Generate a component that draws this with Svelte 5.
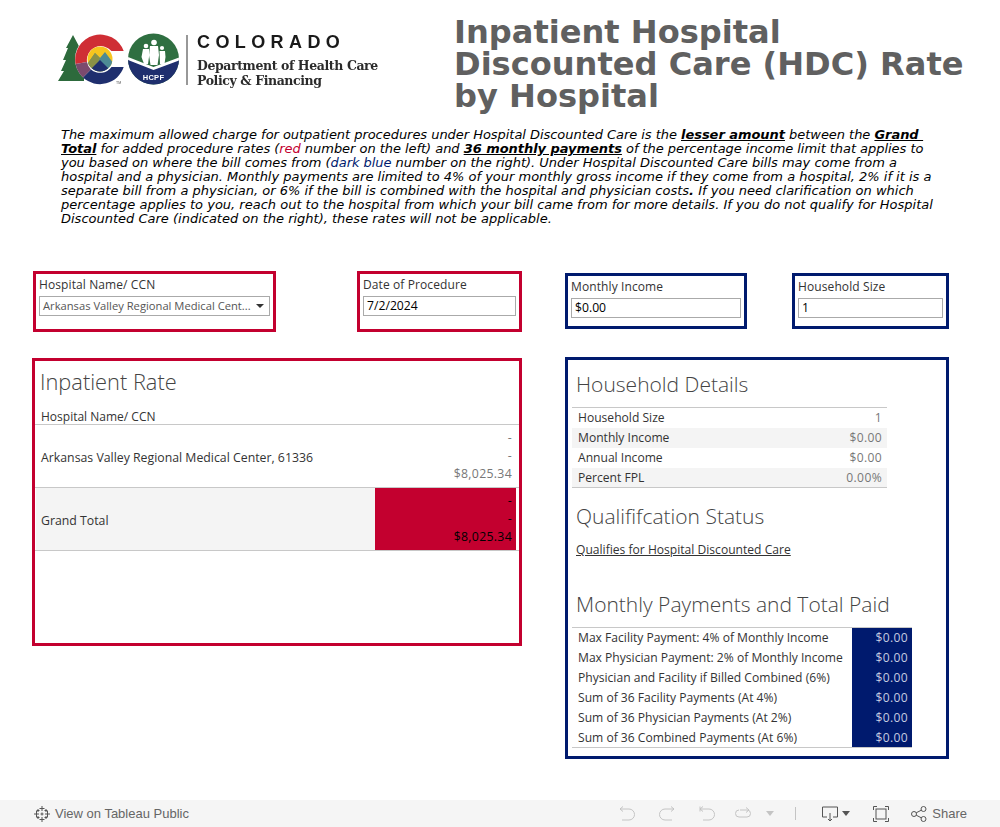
<script>
  const details = [
    ['Household Size', '1'],
    ['Monthly Income', '$0.00'],
    ['Annual Income', '$0.00'],
    ['Percent FPL', '0.00%']
  ]
  const payments = [
    'Max Facility Payment: 4% of Monthly Income',
    'Max Physician Payment: 2% of Monthly Income',
    'Physician and Facility if Billed Combined (6%)',
    'Sum of 36 Facility Payments (At 4%)',
    'Sum of 36 Physician Payments (At 2%)',
    'Sum of 36 Combined Payments (At 6%)'
  ]
</script>

<div class="page">
  <header class="top">
    <div class="logo">
      <svg class="marks" viewBox="58 33 130 52" width="130" height="52">
        <defs>
          <clipPath id="sun"><circle cx="100" cy="59" r="12.5" /></clipPath>
          <clipPath id="seal"><circle cx="153.500" cy="59" r="25.5" /></clipPath>
        </defs>
        <path d="M73 35 L81 50 L84 50 L84 81 L58 81 L64 71 L61 71 L66 60 L63 60 L68 48 L66 48 Z" fill="#2d6a3c" />
        <circle cx="100" cy="59" r="25" fill="#fff" />
        <path d="M123.7 51 A25 25 0 0 0 75.6 64 L87 62 A14 14 0 0 1 111.5 51 Z" fill="#cf2e35" />
        <path d="M75.6 64 A25 25 0 0 0 83 77.5 L91 69.5 A14 14 0 0 1 87 62 Z" fill="#7b4a6e" />
        <path d="M83 77.5 A25 25 0 0 0 123.7 67 L111.5 67 A14 14 0 0 1 91 69.5 Z" fill="#1f2f6e" />
        <g clip-path="url(#sun)">
          <rect x="87" y="46" width="26" height="26" fill="#f6c51e" />
          <path d="M86 66 L95 53 L100 58 L105 52 L114 64 L114 72 L86 72 Z" fill="#4d8a94" />
          <path d="M86 66 L95 53 L100 58 L94 72 L86 72 Z" fill="#8a9146" />
          <path d="M88 72 L100 60 L112 72 Z" fill="#1f2f6e" />
        </g>
        <text x="116" y="84" class="tm">TM</text>
        <g clip-path="url(#seal)">
          <rect x="128" y="33" width="52" height="52" fill="#2f6f41" />
          <path d="M128 59 L153.500 69 L180 59 L180 86 L128 86 Z" fill="#1f2f6e" />
          <path d="M128 57 L153.500 67 L180 57 L180 60 L153.500 70 L128 60 Z" fill="#fff" />
        </g>
        <g fill="#fff">
          <circle cx="154" cy="42.500" r="2.800" />
          <path d="M150 46 H158 L159 55 L157.500 65 H150.500 L149 55 Z" />
          <circle cx="146" cy="46" r="2.300" />
          <path d="M143 49 H149 L149 57 L148 64 H144 L141.500 57 Z" />
          <circle cx="162" cy="48" r="2.100" />
          <path d="M159.500 51 H165 L165.500 57 L164.500 64 H160 Z" />
        </g>
        <text x="153.500" y="80" class="hcpf" text-anchor="middle">HCPF</text>
        <rect x="186.5" y="35" width="1" height="50" fill="#333" />
      </svg>
      <div class="logo-text">
        <div class="state">COLORADO</div>
        <div class="dept">Department of Health Care<br />Policy &amp; Financing</div>
      </div>
    </div>
    <h1>Inpatient Hospital Discounted Care (HDC) Rate by Hospital</h1>
  </header>

  <p class="intro"><span class="tight">The maximum allowed charge for outpatient procedures under Hospital Discounted Care is the <b><u>lesser amount</u></b> between the <b><u>Grand&nbsp;</u><wbr /><u>Total</u></b> for added procedure rates (<span class="red">red</span> number on the left) and <b><u>36 monthly payments</u></b> of the percentage income limit that applies to you based on where the bill comes from (<span class="blue">dark blue</span> number on the right).</span> Under Hospital Discounted Care bills may come from a hospital and a physician. Monthly payments are limited to 4% of your monthly gross income if they come from a hospital, 2% if it is a separate bill from a physician, or 6% if the bill is combined with the hospital and physician costs<b>.</b> If you need clarification on which percentage applies to you, reach out to the hospital from which your bill came from for more details. If you do not qualify for Hospital Discounted Care (indicated on the right), these rates will not be applicable.</p>

  <div class="board">
    <section class="col col-left">
      <div class="filters">
        <div class="filter red-box hospital">
          <div class="label">Hospital Name/ CCN</div>
          <div class="field select">
            <span>Arkansas Valley Regional Medical Cent...</span>
            <i class="caret"></i>
          </div>
        </div>
        <div class="filter red-box date">
          <div class="label">Date of Procedure</div>
          <div class="field strong">7/2/2024</div>
        </div>
      </div>

      <div class="panel red-box inpatient">
        <h2>Inpatient Rate</h2>
        <div class="col-head">Hospital Name/ CCN</div>
        <div class="rate-row">
          <div class="rate-name">Arkansas Valley Regional Medical Center, 61336</div>
          <div class="rate-vals"><span>-</span><span>-</span><span>$8,025.34</span></div>
        </div>
        <div class="rate-row total">
          <div class="rate-name">Grand Total</div>
          <div class="rate-vals"><span>-</span><span>-</span><span>$8,025.34</span></div>
        </div>
      </div>
    </section>

    <section class="col col-right">
      <div class="filters">
        <div class="filter navy-box income">
          <div class="label">Monthly Income</div>
          <div class="field strong">$0.00</div>
        </div>
        <div class="filter navy-box size">
          <div class="label">Household Size</div>
          <div class="field strong">1</div>
        </div>
      </div>

      <div class="panel navy-box household">
        <h2>Household Details</h2>
        <div class="details">
          {#each details as [name, val]}
            <div class="row"><span>{name}</span><span class="val">{val}</span></div>
          {/each}
        </div>
        <h2 class="qual">Qualififcation Status</h2>
        <div class="status">Qualifies for Hospital Discounted Care</div>
        <h2 class="pay">Monthly Payments and Total Paid</h2>
        <div class="payments">
          {#each payments as name}
            <div class="row"><span>{name}</span><span class="val">$0.00</span></div>
          {/each}
        </div>
      </div>
    </section>
  </div>

  <footer class="toolbar">
    <div class="public">
      <svg width="18" height="18" viewBox="0 0 18 18" stroke="#555" stroke-width="1" fill="none">
        <path d="M9 1v5M6.500 3.500h5M9 12v5M6.500 14.500h5M3.500 6v6M1 9h5M14.500 6v6M12 9h5M5 4v3M3.500 5.500h3M13 4v3M11.500 5.500h3M5 11v3M3.500 12.500h3M13 11v3M11.500 12.500h3M9 7.500v3M7.500 9h3" />
      </svg>
      <span>View on Tableau Public</span>
    </div>
    <div class="actions">
      <svg class="off" width="16" height="16" viewBox="0 0 16 16"><path d="M1 3h9a5 5 0 0 1 0 11H3M4 0.500 1 3l3 2.500" /></svg>
      <svg class="off" width="16" height="16" viewBox="0 0 16 16"><path d="M15 3H6a5 5 0 0 0 0 11h7M12 0.500 15 3l-3 2.500" /></svg>
      <svg class="off rev" width="16" height="16" viewBox="0 0 16 16"><path d="M1 0.500v5M1 3h9a5 5 0 0 1 0 11H4M4 0.500 1 3l3 2.500" /></svg>
      <svg class="off refresh" width="16" height="16" viewBox="0 0 16 16"><path d="M5 4h7a3.500 3.500 0 0 1 0 7H4a3.500 3.500 0 0 1 0-7M11 1.500 14 4l-3 2.500" /></svg>
      <i class="tri faint"></i>
      <span class="sep"></span>
      <svg class="on dl" width="16" height="16" viewBox="0 0 16 16"><path d="M5 11H.5V1h15v10H11M8 7v8M6 13l2 2 2-2" /></svg>
      <i class="tri"></i>
      <svg class="on full" width="16" height="16" viewBox="0 0 16 16"><path d="M.5 4V.5H4M12 .5h3.500V4M15.500 12v3.500H12M4 15.500H.5V12" /><rect x="3" y="3" width="10" height="10" /></svg>
      <div class="share">
        <svg class="on" width="16" height="16" viewBox="0 0 16 16"><circle cx="3" cy="8" r="2.500" /><circle cx="12.500" cy="3" r="2.500" /><circle cx="12.500" cy="13" r="2.500" /><path d="M5.200 6.800 10.300 4.200M5.200 9.200l5.100 2.600" /></svg>
        <span>Share</span>
      </div>
    </div>
  </footer>
</div>

<style>
  :global(body) {
    margin: 0;
    background: #fff;
  }
  .page {
    display: flex;
    flex-direction: column;
    height: 827px;
    overflow: hidden;
    font-family: "Open Sans", sans-serif;
    color: #333;
  }
  .top {
    display: flex;
    height: 112px;
  }
  .logo {
    display: flex;
    width: 320px;
    margin: 33px 0 0 58px;
    flex-shrink: 0;
    filter: blur(0.3px);
  }
  .marks {
    display: block;
  }
  .tm {
    font: 3.500px "Liberation Sans", sans-serif;
    fill: #555;
  }
  .hcpf {
    font: bold 7.500px "Liberation Sans", sans-serif;
    fill: #fff;
    letter-spacing: 0.3px;
  }
  .logo-text {
    margin-left: 9px;
    color: #2b2b2b;
  }
  .state {
    font: bold 18px/15px "Liberation Sans", sans-serif;
    letter-spacing: 5.400px;
    color: #1a1a1a;
    margin-top: 2px;
  }
  .dept {
    font: bold 12.500px/14.500px "DejaVu Serif", serif;
    letter-spacing: -0.4px;
    margin-top: 9px;
  }
  h1 {
    margin: 16px 0 0 76px;
    width: 530px;
    font: bold 32.100px/32px "DejaVu Sans", sans-serif;
    color: #606060;
  }
  .intro {
    margin: 16px 0 0 61px;
    width: 875px;
    font: italic 13px/14px "DejaVu Sans", sans-serif;
    color: #000;
  }
  .tight {
    letter-spacing: -0.04px;
  }
  .red {
    color: #c3002f;
  }
  .blue {
    color: #001a6e;
  }
  .board {
    display: flex;
    gap: 43px;
    margin: 45px 0 0 32px;
  }
  .col-left {
    width: 490px;
  }
  .col-right {
    width: 384px;
    padding-top: 2px;
  }
  .filters {
    display: flex;
    justify-content: space-between;
    align-items: flex-start;
  }
  .red-box {
    border: 3px solid #c3002f;
    box-sizing: border-box;
  }
  .navy-box {
    border: 3px solid #001a6e;
    box-sizing: border-box;
  }
  .filter {
    padding: 3px 3px 0;
  }
  .hospital {
    width: 243px;
    height: 61px;
    margin-left: 1px;
  }
  .date {
    width: 165px;
    height: 61px;
  }
  .income {
    width: 182px;
    height: 56px;
  }
  .size {
    width: 157px;
    height: 56px;
  }
  .label {
    font-size: 12px;
    line-height: 16px;
    letter-spacing: 0.1px;
    color: #333;
    margin-bottom: 3px;
  }
  .field {
    display: flex;
    align-items: center;
    justify-content: space-between;
    box-sizing: border-box;
    height: 20px;
    padding: 0 3px 2px;
    border: 1px solid #aaa;
    font-size: 12.200px;
    color: #000;
    white-space: nowrap;
  }
  .select {
    font-size: 11.200px;
    color: #555;
  }
  .caret {
    border: 4px solid transparent;
    border-top: 4px solid #333;
    border-bottom: 0;
    margin: 2px 2px 0 0;
  }
  .panel {
    box-sizing: border-box;
  }
  h2 {
    margin: 0;
    font-weight: 300;
    font-size: 21px;
    line-height: 26px;
    color: #444;
  }
  .inpatient {
    height: 288px;
    margin-top: 26px;
    padding: 8px 0 0;
  }
  .inpatient h2 {
    margin-left: 5px;
    font-size: 21.800px;
  }
  .col-head {
    margin: 14px 0 0 6px;
    font-size: 12px;
    line-height: 15px;
  }
  .rate-row {
    display: flex;
    align-items: center;
    justify-content: space-between;
    height: 63px;
    border-top: 1px solid #c8c8c8;
    box-sizing: border-box;
    font-size: 12.300px;
  }
  .rate-name {
    padding: 2px 0 0 6px;
  }
  .rate-vals {
    display: flex;
    flex-direction: column;
    align-items: flex-end;
    justify-content: center;
    box-sizing: border-box;
    width: 141px;
    height: 100%;
    padding-right: 7px;
    line-height: 18px;
    letter-spacing: 0.3px;
    color: #777;
  }
  .total {
    border-bottom: 1px solid #c8c8c8;
    height: 64px;
  }
  .total .rate-name {
    flex: 1;
    align-self: stretch;
    display: flex;
    align-items: center;
    background: #f4f4f4;
    margin-left: 1px;
    padding-left: 5px;
  }
  .total .rate-vals {
    background: #c3002f;
    color: #000;
    margin-right: 3px;
    padding-right: 4px;
  }
  .household {
    height: 402px;
    margin-top: 28px;
    padding: 11px 0 0 4px;
  }
  .household h2 {
    margin-left: 4px;
  }
  .row {
    display: flex;
    justify-content: space-between;
    align-items: center;
    box-sizing: border-box;
    height: 20px;
    padding: 0 0 1px 6px;
    font-size: 12.100px;
  }
  .row:last-child {
    height: 19px;
  }
  .val {
    letter-spacing: 0.35px;
    color: #777;
  }
  .details {
    width: 315px;
    margin-top: 10px;
    border-top: 1px solid #c8c8c8;
    border-bottom: 1px solid #c8c8c8;
  }
  .details .row {
    padding-right: 5px;
  }
  .details .row:nth-child(even) {
    background: #f4f4f4;
  }
  .household h2.qual {
    margin-top: 15px;
  }
  .status {
    margin: 13px 0 0 4px;
    font-size: 12.100px;
    line-height: 16px;
    text-decoration: underline;
  }
  .household h2.pay {
    margin-top: 33px;
  }
  .payments {
    width: 340px;
    margin-top: 10px;
    border-top: 1px solid #c8c8c8;
    border-bottom: 1px solid #c8c8c8;
  }
  .payments .row {
    padding: 0 0 0 6px;
  }
  .payments .row span:first-child {
    padding-bottom: 1px;
  }
  .payments .val {
    box-sizing: border-box;
    align-self: stretch;
    width: 60px;
    padding-right: 4px;
    text-align: right;
    line-height: 19px;
    color: #c5cbe0;
    background: #001a6e;
  }
  .toolbar {
    display: flex;
    justify-content: space-between;
    align-items: center;
    height: 27px;
    margin-top: auto;
    background: #f5f5f5;
    font: 13px "Liberation Sans", sans-serif;
    color: #666;
  }
  .public {
    display: flex;
    align-items: center;
    gap: 4px;
    margin-left: 33px;
  }
  .actions {
    display: flex;
    align-items: center;
    margin-right: 33px;
  }
  .actions svg {
    fill: none;
    stroke-width: 1;
  }
  .off {
    stroke: #c4c4c4;
    margin-right: 24px;
  }
  .off.rev {
    margin-right: 20px;
  }
  .off.refresh {
    margin-right: 18px;
  }
  .on {
    stroke: #555;
  }
  .tri {
    border: 4px solid transparent;
    border-top: 5px solid #555;
    border-bottom: 0;
  }
  .tri.faint {
    border-top-color: #c4c4c4;
    margin: 0 0 0 -3px;
  }
  .sep {
    width: 1px;
    height: 13px;
    background: #c4c4c4;
    margin: 0 26px 0 21px;
  }
  .dl {
    margin-right: 4px;
  }
  .full {
    margin: 0 22px 0 23px;
  }
  .share {
    display: flex;
    align-items: center;
    gap: 5px;
  }
</style>
